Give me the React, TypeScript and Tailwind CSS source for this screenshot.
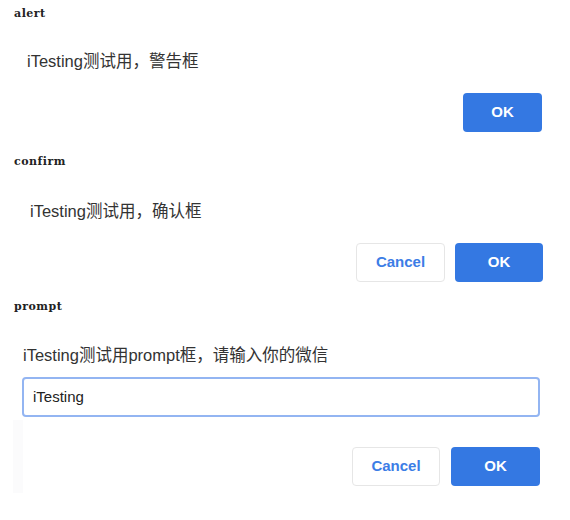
const sans = "font-['Liberation_Sans','Noto_Sans_CJK_SC',sans-serif]";

function Label({ text, className }: { text: string; className: string }) {
  return (
    <div
      className={`pl-[14px] text-[11px] leading-[14px] font-bold tracking-[0.5px] text-[#222] font-['DejaVu_Serif',serif] ${className}`}
    >
      {text}
    </div>
  );
}

function OkButton() {
  return (
    <button className="h-[39px] rounded-[4px] bg-[#3478e2] text-[15px] font-bold text-white">
      OK
    </button>
  );
}

function CancelButton() {
  return (
    <button className="h-[39px] rounded-[4px] border border-[#e6e6e6] bg-white text-[15px] font-bold text-[#3c7de6]">
      Cancel
    </button>
  );
}

export default function App() {
  return (
    <div className={`w-[570px] h-[520px] bg-white text-[#333] ${sans}`}>
      {/* alert */}
      <Label text="alert" className="pt-[7px]" />
      <div className="mt-[28px] pl-[27px] text-[16.5px] leading-[24px]">iTesting测试用，警告框</div>
      <div className="mt-[20px] flex justify-end pr-[28px]">
        <div className="w-[79px] flex flex-col">
          <OkButton />
        </div>
      </div>

      {/* confirm */}
      <Label text="confirm" className="mt-[23px]" />
      <div className="mt-[30px] pl-[30px] text-[16.5px] leading-[24px]">iTesting测试用，确认框</div>
      <div className="mt-[20px] flex justify-end gap-[10px] pr-[27px]">
        <div className="w-[89px] flex flex-col">
          <CancelButton />
        </div>
        <div className="w-[88px] flex flex-col">
          <OkButton />
        </div>
      </div>

      {/* prompt */}
      <Label text="prompt" className="mt-[18px]" />
      <div className="mt-[29px] pl-[23px] text-[16.5px] leading-[24px]">iTesting测试用prompt框，请输入你的微信</div>
      <div className="mt-[10px] pl-[22px] pr-[30px]">
        <div className="h-[40px] rounded-[4px] border-2 border-[#93b5f2] bg-white pl-[9px] text-[15px] leading-[36px] text-[#222]">
          iTesting
        </div>
      </div>
      <div className="flex">
        <div className="ml-[13px] mt-[3px] h-[73px] w-[10px] bg-[#fbfbfc]" />
        <div className="flex-1 flex justify-end gap-[11px] pr-[30px] pt-[30px]">
          <div className="w-[88px] flex flex-col">
            <CancelButton />
          </div>
          <div className="w-[89px] flex flex-col">
            <OkButton />
          </div>
        </div>
      </div>
    </div>
  );
}
